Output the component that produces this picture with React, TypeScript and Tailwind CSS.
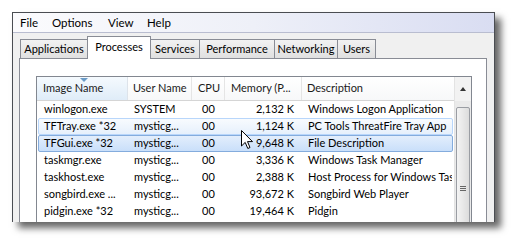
import React from 'react';

type Row = { name: string; user: string; cpu: string; mem: string; desc: string; state?: 'hover' | 'selected' };

const rows: Row[] = [
  { name: 'winlogon.exe', user: 'SYSTEM', cpu: '00', mem: '2,132 K', desc: 'Windows Logon Application' },
  { name: 'TFTray.exe *32', user: 'mysticg...', cpu: '00', mem: '1,124 K', desc: 'PC Tools ThreatFire Tray App', state: 'hover' },
  { name: 'TFGui.exe *32', user: 'mysticg...', cpu: '00', mem: '9,648 K', desc: 'File Description', state: 'selected' },
  { name: 'taskmgr.exe', user: 'mysticg...', cpu: '00', mem: '3,336 K', desc: 'Windows Task Manager' },
  { name: 'taskhost.exe', user: 'mysticg...', cpu: '00', mem: '2,388 K', desc: 'Host Process for Windows Tasks' },
  { name: 'songbird.exe ...', user: 'mysticg...', cpu: '00', mem: '93,672 K', desc: 'Songbird Web Player' },
  { name: 'pidgin.exe *32', user: 'mysticg...', cpu: '00', mem: '19,464 K', desc: 'Pidgin' },
];

// tab label + width in px
const tabs: [string, string][] = [
  ['Applications', 'w-[68px]'],
  ['Processes', 'w-[64px]'],
  ['Services', 'w-[50px]'],
  ['Performance', 'w-[76px]'],
  ['Networking', 'w-[64px]'],
  ['Users', 'w-[39px]'],
];

const Cursor = () => (
  <svg className="absolute left-[241px] top-[130px]" width="13" height="20" viewBox="0 0 13 20">
    <path d="M0.5 0.5 L0.5 16 L4.2 12.4 L6.8 18.5 L9 17.5 L6.5 11.6 L11.5 11.6 Z" fill="#fff" stroke="#000" strokeWidth="1" strokeLinejoin="miter" />
  </svg>
);

export default function App() {
  return (
    <div
      className="relative w-[514px] h-[241px] bg-white overflow-hidden text-[11px] text-black"
      style={{ fontFamily: 'Lato, "Noto Sans", sans-serif' }}
    >
      <div className="ml-[12px] mt-[12px] w-[483px] h-[210px] flex flex-col bg-[#f0f0f0] border border-b-0 border-[#4a4d52] shadow-[6px_6px_7px_rgba(0,0,0,0.6)] overflow-hidden">
        {/* menu */}
        <div className="h-[20px] shrink-0 flex items-center pl-[7px] text-[11.5px] bg-gradient-to-r from-[#fbfbfd] via-[#eef0f8] to-[#d9ddf2] border-b border-[#b9bdd0]">
          <span className="w-[32px]">File</span>
          <span className="w-[56px]">Options</span>
          <span className="w-[39px]">View</span>
          <span>Help</span>
        </div>

        {/* tabs */}
        <div className="h-[25px] shrink-0 flex items-end pl-[7px] whitespace-nowrap">
          {tabs.map(([t, w]) =>
            t === 'Processes' ? (
              <div key={t} className={w + ' h-[23px] -mb-px -ml-px relative z-10 text-center pt-[2px] bg-white border border-b-0 border-[#898c95] leading-[16px]'}>
                {t}
              </div>
            ) : (
              <div key={t} className={w + ' h-[19px] -ml-px first:ml-0 text-center bg-gradient-to-b from-[#f2f2f2] to-[#e0e0e0] border border-b-0 border-[#898c95] leading-[17px]'}>
                {t}
              </div>
            )
          )}
        </div>

        {/* panel */}
        <div className="ml-[6px] w-[468px] flex-1 min-h-0 overflow-hidden bg-white border border-b-0 border-[#898c95] pl-[16px] pt-[17px]">
          <div className="w-[436px] h-[200px] border border-[#828790] flex bg-white">
            <div className="flex-1 min-w-0 flex flex-col">
              {/* header */}
              <div className="h-[24px] shrink-0 flex border-b border-[#d5d5d5] bg-gradient-to-b from-white to-[#f7f8f9] text-[#1a1a1a] whitespace-nowrap">
                <div className="relative w-[91px] shrink-0 pl-[6px] flex items-center bg-gradient-to-b from-[#f5fafe] to-[#dfecf8] border-r border-[#dde3ea]">
                  <span className="absolute left-[43px] top-[1px] w-0 h-0 border-l-[4px] border-r-[4px] border-t-[4px] border-l-transparent border-r-transparent border-t-[#6a9bc7]" />
                  Image Name
                </div>
                <div className="w-[64px] shrink-0 pl-[5px] flex items-center border-r border-[#e5e5e5]">User Name</div>
                <div className="w-[33px] shrink-0 pl-[6px] flex items-center border-r border-[#e5e5e5]">CPU</div>
                <div className="w-[77px] shrink-0 pl-[6px] flex items-center border-r border-[#e5e5e5] overflow-hidden">Memory (P...</div>
                <div className="flex-1 pl-[5px] flex items-center">Description</div>
              </div>
              {/* rows */}
              <div className="flex flex-col">
                {rows.map((r) => (
                  <div
                    key={r.name}
                    className={
                      'h-[17px] shrink-0 mx-px flex items-center whitespace-nowrap overflow-hidden rounded-[2px] border ' +
                      (r.state === 'selected'
                        ? 'border-[#84acdd] bg-gradient-to-b from-[#e3eefc] to-[#c9dffa]'
                        : r.state === 'hover'
                        ? 'border-[#b8d6fb] bg-gradient-to-b from-[#f8fbfe] to-[#e6f0fc]'
                        : 'border-transparent')
                    }
                  >
                    <div className="w-[90px] pl-[5px] shrink-0">{r.name}</div>
                    <div className="w-[64px] pl-[5px] shrink-0">{r.user}</div>
                    <div className="w-[33px] pl-[9px] shrink-0">{r.cpu}</div>
                    <div className="w-[77px] pr-[9px] text-right shrink-0">{r.mem}</div>
                    <div className="flex-1 min-w-0 pl-[5px] overflow-hidden">{r.desc}</div>
                  </div>
                ))}
              </div>
            </div>
            {/* scrollbar */}
            <div className="w-[17px] shrink-0 flex flex-col bg-[#eaeaea] border-l border-[#e3e3e3]">
              <div className="h-[24px] shrink-0 flex items-center justify-center bg-[#f2f2f2]">
                <span className="w-0 h-0 border-l-[3px] border-r-[3px] border-b-[4px] border-l-transparent border-r-transparent border-b-[#333]" />
              </div>
              <div className="mt-[6px] mx-px h-[160px] shrink-0 flex items-center justify-center rounded-[2px] border border-[#9a9da3] bg-gradient-to-r from-[#f4f4f4] to-[#dcdcdc]">
                <div className="flex flex-col gap-[1px] mt-[2px]">
                  <span className="w-[6px] h-px bg-[#666]" />
                  <span className="w-[6px] h-px bg-[#666]" />
                  <span className="w-[6px] h-px bg-[#666]" />
                </div>
              </div>
            </div>
          </div>
        </div>
      </div>
      <Cursor />
    </div>
  );
}
